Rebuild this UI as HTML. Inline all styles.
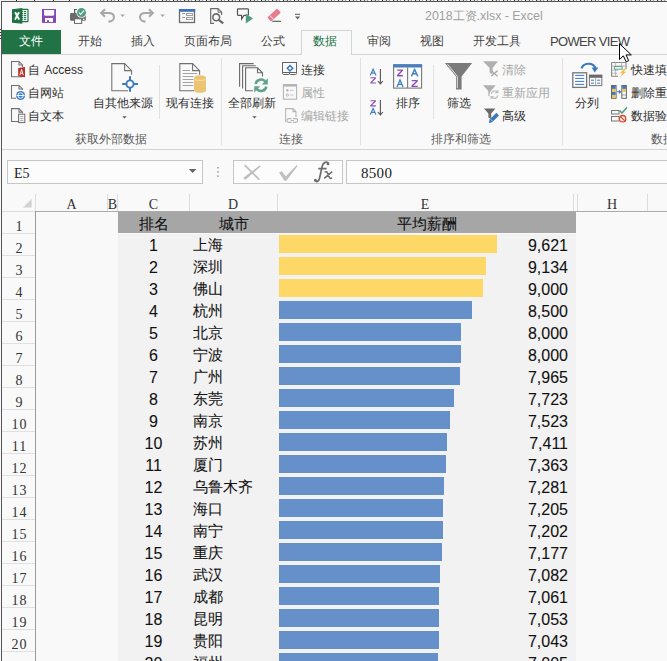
<!DOCTYPE html><html><head><meta charset="utf-8"><style>
*{margin:0;padding:0;box-sizing:border-box}
html,body{width:667px;height:661px;overflow:hidden;background:#f9f9f9}
body{position:relative;font-family:"Liberation Sans",sans-serif;color:#444}
.a{position:absolute}
.t{position:absolute;white-space:nowrap;line-height:1}
svg{position:absolute;overflow:visible}
.rb{font-size:12px;color:#2e2e2e}
.dis{color:#a6a6a6}
.gl{color:#5a5a5a}
.tab{font-size:12px;color:#444}
.ser{font-family:"Liberation Serif",serif}
.cell{font-size:15px;color:#111;-webkit-text-stroke:0.08px #111}
.num{font-size:16px}
</style></head><body>
<div class="a" style="left:0;top:0;width:667px;height:1px;background:#f0f0f0"></div>
<div class="a" style="left:0;top:29px;width:1px;height:1px;background:#333"></div>
<div class="a" style="left:0;top:32px;width:1px;height:1px;background:#333"></div>
<div class="a" style="left:0;top:35px;width:1px;height:1px;background:#333"></div>
<div class="a" style="left:0;top:38px;width:1px;height:1px;background:#333"></div>
<div class="a" style="left:16px;top:0;width:1px;height:1px;background:#222"></div>
<div class="a" style="left:34px;top:0;width:1px;height:1px;background:#222"></div>
<div class="a" style="left:53px;top:0;width:1px;height:1px;background:#222"></div>
<div class="a" style="left:69px;top:0;width:1px;height:1px;background:#222"></div>
<div class="a" style="left:100px;top:0;width:567px;height:1px;background:repeating-linear-gradient(90deg,#555 0 1px,#e6e6e6 1px 3px,#999 3px 4px,#f0f0f0 4px 7px,#333 7px 8px,#ddd 8px 11px)"></div>
<div class="a" style="left:1px;top:1px;width:666px;height:1px;background:#555"></div>
<div class="a" style="left:1px;top:1px;width:1px;height:660px;background:#555"></div>
<div class="t" style="left:425px;top:10px;font-size:12.4px;color:#a0a0a0">2018工资.xlsx - Excel</div>
<div class="a" style="left:2px;top:30px;width:59px;height:24px;background:#217346"></div>
<div class="t tab" style="left:19px;top:35px;color:#fff">文件</div>
<div class="t tab" style="left:78px;top:35px">开始</div>
<div class="t tab" style="left:131px;top:35px">插入</div>
<div class="t tab" style="left:184px;top:35px">页面布局</div>
<div class="t tab" style="left:261px;top:35px">公式</div>
<div class="t tab" style="left:367px;top:35px">审阅</div>
<div class="t tab" style="left:420px;top:35px">视图</div>
<div class="t tab" style="left:473px;top:35px">开发工具</div>
<div class="t" style="left:550px;top:35px;font-size:13px;color:#444;letter-spacing:-0.65px">POWER VIEW</div>
<div class="a" style="left:2px;top:54px;width:665px;height:1px;background:#d4d4d4"></div>
<div class="a" style="left:301px;top:30px;width:51px;height:25px;border:1px solid #d4d4d4;border-bottom:none;background:#f9f9f9"></div>
<div class="t tab" style="left:313px;top:35px;color:#217346">数据</div>
<div class="a" style="left:2px;top:149px;width:665px;height:1px;background:#d4d4d4"></div>
<div class="t rb" style="left:28px;top:64px">自 <span style="margin-left:1px">Access</span></div>
<div class="t rb" style="left:28px;top:87px">自网站</div>
<div class="t rb" style="left:28px;top:110px">自文本</div>
<div class="t rb" style="left:93px;top:97px">自其他来源</div>
<div class="t rb" style="left:166px;top:97px">现有连接</div>
<div class="t rb gl" style="left:75px;top:133px">获取外部数据</div>
<div class="a" style="left:159px;top:65px;width:1px;height:54px;background:#e1e1e1"></div>
<div class="a" style="left:221px;top:58px;width:1px;height:87px;background:#e1e1e1"></div>
<div class="t rb" style="left:228px;top:97px">全部刷新</div>
<div class="t rb" style="left:301px;top:64px">连接</div>
<div class="t rb dis" style="left:301px;top:87px">属性</div>
<div class="t rb dis" style="left:301px;top:110px">编辑链接</div>
<div class="t rb gl" style="left:279px;top:133px">连接</div>
<div class="a" style="left:360px;top:58px;width:1px;height:87px;background:#e1e1e1"></div>
<div class="t rb" style="left:396px;top:97px">排序</div>
<div class="t rb" style="left:447px;top:97px">筛选</div>
<div class="t rb dis" style="left:502px;top:64px">清除</div>
<div class="t rb dis" style="left:502px;top:87px">重新应用</div>
<div class="t rb" style="left:502px;top:110px">高级</div>
<div class="t rb gl" style="left:431px;top:133px">排序和筛选</div>
<div class="a" style="left:433px;top:65px;width:1px;height:54px;background:#e1e1e1"></div>
<div class="a" style="left:562px;top:58px;width:1px;height:87px;background:#e1e1e1"></div>
<div class="t rb" style="left:575px;top:97px">分列</div>
<div class="t rb" style="left:631px;top:64px">快速填充</div>
<div class="t rb" style="left:631px;top:87px">删除重复项</div>
<div class="t rb" style="left:631px;top:110px">数据验证</div>
<div class="t rb gl" style="left:651px;top:133px">数据工具</div>
<div class="a" style="left:7px;top:160px;width:196px;height:24px;border:1px solid #c6c6c6;background:#fcfcfc"></div>
<div class="t ser" style="left:14px;top:167px;font-size:14px;color:#222">E5</div>
<div class="a" style="left:233px;top:160px;width:110px;height:24px;border:1px solid #c6c6c6;background:#fcfcfc"></div>
<div class="a" style="left:346px;top:160px;width:330px;height:24px;border:1px solid #c6c6c6;background:#fcfcfc"></div>
<div class="t ser" style="left:361px;top:166px;font-size:15px;color:#222;letter-spacing:0.3px">8500</div>
<div class="a" style="left:2px;top:211px;width:33px;height:1px;background:#dcdcdc"></div>
<div class="a" style="left:35px;top:211px;width:632px;height:1px;background:#ababab"></div>
<div class="a" style="left:35px;top:194px;width:1px;height:17px;background:#dcdcdc"></div>
<div class="a" style="left:35px;top:211px;width:1px;height:450px;background:#9a9a9a"></div>
<div class="a" style="left:107px;top:194px;width:1px;height:17px;background:#dcdcdc"></div>
<div class="a" style="left:117px;top:194px;width:1px;height:17px;background:#dcdcdc"></div>
<div class="a" style="left:189px;top:194px;width:1px;height:17px;background:#dcdcdc"></div>
<div class="a" style="left:277px;top:194px;width:1px;height:17px;background:#dcdcdc"></div>
<div class="a" style="left:573px;top:194px;width:1px;height:17px;background:#dcdcdc"></div>
<div class="a" style="left:577px;top:194px;width:1px;height:17px;background:#dcdcdc"></div>
<div class="a" style="left:647px;top:194px;width:1px;height:17px;background:#dcdcdc"></div>
<div class="t ser" style="left:56.5px;width:30px;text-align:center;top:198px;font-size:14px;color:#333">A</div>
<div class="t ser" style="left:97.5px;width:30px;text-align:center;top:198px;font-size:14px;color:#333">B</div>
<div class="t ser" style="left:138.5px;width:30px;text-align:center;top:198px;font-size:14px;color:#333">C</div>
<div class="t ser" style="left:218px;width:30px;text-align:center;top:198px;font-size:14px;color:#333">D</div>
<div class="t ser" style="left:410px;width:30px;text-align:center;top:198px;font-size:14px;color:#333">E</div>
<div class="t ser" style="left:597px;width:30px;text-align:center;top:198px;font-size:14px;color:#333">H</div>
<div class="a" style="left:2px;top:233px;width:33px;height:1px;background:#e0e0e0"></div>
<div class="t ser" style="left:3px;width:33px;text-align:center;top:220px;font-size:14px;color:#333;letter-spacing:1px">1</div>
<div class="a" style="left:2px;top:255px;width:33px;height:1px;background:#e0e0e0"></div>
<div class="t ser" style="left:3px;width:33px;text-align:center;top:242px;font-size:14px;color:#333;letter-spacing:1px">2</div>
<div class="a" style="left:2px;top:277px;width:33px;height:1px;background:#e0e0e0"></div>
<div class="t ser" style="left:3px;width:33px;text-align:center;top:264px;font-size:14px;color:#333;letter-spacing:1px">3</div>
<div class="a" style="left:2px;top:299px;width:33px;height:1px;background:#e0e0e0"></div>
<div class="t ser" style="left:3px;width:33px;text-align:center;top:286px;font-size:14px;color:#333;letter-spacing:1px">4</div>
<div class="a" style="left:2px;top:321px;width:33px;height:1px;background:#e0e0e0"></div>
<div class="t ser" style="left:3px;width:33px;text-align:center;top:308px;font-size:14px;color:#333;letter-spacing:1px">5</div>
<div class="a" style="left:2px;top:343px;width:33px;height:1px;background:#e0e0e0"></div>
<div class="t ser" style="left:3px;width:33px;text-align:center;top:330px;font-size:14px;color:#333;letter-spacing:1px">6</div>
<div class="a" style="left:2px;top:365px;width:33px;height:1px;background:#e0e0e0"></div>
<div class="t ser" style="left:3px;width:33px;text-align:center;top:352px;font-size:14px;color:#333;letter-spacing:1px">7</div>
<div class="a" style="left:2px;top:387px;width:33px;height:1px;background:#e0e0e0"></div>
<div class="t ser" style="left:3px;width:33px;text-align:center;top:374px;font-size:14px;color:#333;letter-spacing:1px">8</div>
<div class="a" style="left:2px;top:409px;width:33px;height:1px;background:#e0e0e0"></div>
<div class="t ser" style="left:3px;width:33px;text-align:center;top:396px;font-size:14px;color:#333;letter-spacing:1px">9</div>
<div class="a" style="left:2px;top:431px;width:33px;height:1px;background:#e0e0e0"></div>
<div class="t ser" style="left:3px;width:33px;text-align:center;top:418px;font-size:14px;color:#333;letter-spacing:1px">10</div>
<div class="a" style="left:2px;top:453px;width:33px;height:1px;background:#e0e0e0"></div>
<div class="t ser" style="left:3px;width:33px;text-align:center;top:440px;font-size:14px;color:#333;letter-spacing:1px">11</div>
<div class="a" style="left:2px;top:475px;width:33px;height:1px;background:#e0e0e0"></div>
<div class="t ser" style="left:3px;width:33px;text-align:center;top:462px;font-size:14px;color:#333;letter-spacing:1px">12</div>
<div class="a" style="left:2px;top:497px;width:33px;height:1px;background:#e0e0e0"></div>
<div class="t ser" style="left:3px;width:33px;text-align:center;top:484px;font-size:14px;color:#333;letter-spacing:1px">13</div>
<div class="a" style="left:2px;top:519px;width:33px;height:1px;background:#e0e0e0"></div>
<div class="t ser" style="left:3px;width:33px;text-align:center;top:506px;font-size:14px;color:#333;letter-spacing:1px">14</div>
<div class="a" style="left:2px;top:541px;width:33px;height:1px;background:#e0e0e0"></div>
<div class="t ser" style="left:3px;width:33px;text-align:center;top:528px;font-size:14px;color:#333;letter-spacing:1px">15</div>
<div class="a" style="left:2px;top:563px;width:33px;height:1px;background:#e0e0e0"></div>
<div class="t ser" style="left:3px;width:33px;text-align:center;top:550px;font-size:14px;color:#333;letter-spacing:1px">16</div>
<div class="a" style="left:2px;top:585px;width:33px;height:1px;background:#e0e0e0"></div>
<div class="t ser" style="left:3px;width:33px;text-align:center;top:572px;font-size:14px;color:#333;letter-spacing:1px">17</div>
<div class="a" style="left:2px;top:607px;width:33px;height:1px;background:#e0e0e0"></div>
<div class="t ser" style="left:3px;width:33px;text-align:center;top:594px;font-size:14px;color:#333;letter-spacing:1px">18</div>
<div class="a" style="left:2px;top:629px;width:33px;height:1px;background:#e0e0e0"></div>
<div class="t ser" style="left:3px;width:33px;text-align:center;top:616px;font-size:14px;color:#333;letter-spacing:1px">19</div>
<div class="a" style="left:2px;top:651px;width:33px;height:1px;background:#e0e0e0"></div>
<div class="t ser" style="left:3px;width:33px;text-align:center;top:638px;font-size:14px;color:#333;letter-spacing:1px">20</div>
<div class="a" style="left:2px;top:673px;width:33px;height:1px;background:#e0e0e0"></div>
<div class="t ser" style="left:3px;width:33px;text-align:center;top:660px;font-size:14px;color:#333;letter-spacing:1px">21</div>
<div class="a" style="left:118px;top:212px;width:458px;height:21px;background:#a6a6a6"></div>
<div class="t cell" style="left:118px;width:71px;text-align:center;top:216px">排名</div>
<div class="t cell" style="left:190px;width:88px;text-align:center;top:216px">城市</div>
<div class="t cell" style="left:279px;width:296px;text-align:center;top:216px">平均薪酬</div>
<div class="a" style="left:118px;top:234px;width:458px;height:427px;background:#f2f2f2"></div>
<div class="a" style="left:279px;top:235px;width:218px;height:18px;background:#fed866"></div>
<div class="t cell num" style="left:118px;width:71px;text-align:center;top:238px">1</div>
<div class="t cell" style="left:193px;top:237px">上海</div>
<div class="t cell num" style="left:400px;width:168px;text-align:right;top:238px">9,621</div>
<div class="a" style="left:279px;top:257px;width:207px;height:18px;background:#fed866"></div>
<div class="t cell num" style="left:118px;width:71px;text-align:center;top:260px">2</div>
<div class="t cell" style="left:193px;top:259px">深圳</div>
<div class="t cell num" style="left:400px;width:168px;text-align:right;top:260px">9,134</div>
<div class="a" style="left:279px;top:279px;width:204px;height:18px;background:#fed866"></div>
<div class="t cell num" style="left:118px;width:71px;text-align:center;top:282px">3</div>
<div class="t cell" style="left:193px;top:281px">佛山</div>
<div class="t cell num" style="left:400px;width:168px;text-align:right;top:282px">9,000</div>
<div class="a" style="left:279px;top:301px;width:193px;height:18px;background:#6690c9"></div>
<div class="t cell num" style="left:118px;width:71px;text-align:center;top:304px">4</div>
<div class="t cell" style="left:193px;top:303px">杭州</div>
<div class="t cell num" style="left:400px;width:168px;text-align:right;top:304px">8,500</div>
<div class="a" style="left:279px;top:323px;width:182px;height:18px;background:#6690c9"></div>
<div class="t cell num" style="left:118px;width:71px;text-align:center;top:326px">5</div>
<div class="t cell" style="left:193px;top:325px">北京</div>
<div class="t cell num" style="left:400px;width:168px;text-align:right;top:326px">8,000</div>
<div class="a" style="left:279px;top:345px;width:182px;height:18px;background:#6690c9"></div>
<div class="t cell num" style="left:118px;width:71px;text-align:center;top:348px">6</div>
<div class="t cell" style="left:193px;top:347px">宁波</div>
<div class="t cell num" style="left:400px;width:168px;text-align:right;top:348px">8,000</div>
<div class="a" style="left:279px;top:367px;width:181px;height:18px;background:#6690c9"></div>
<div class="t cell num" style="left:118px;width:71px;text-align:center;top:370px">7</div>
<div class="t cell" style="left:193px;top:369px">广州</div>
<div class="t cell num" style="left:400px;width:168px;text-align:right;top:370px">7,965</div>
<div class="a" style="left:279px;top:389px;width:175px;height:18px;background:#6690c9"></div>
<div class="t cell num" style="left:118px;width:71px;text-align:center;top:392px">8</div>
<div class="t cell" style="left:193px;top:391px">东莞</div>
<div class="t cell num" style="left:400px;width:168px;text-align:right;top:392px">7,723</div>
<div class="a" style="left:279px;top:411px;width:171px;height:18px;background:#6690c9"></div>
<div class="t cell num" style="left:118px;width:71px;text-align:center;top:414px">9</div>
<div class="t cell" style="left:193px;top:413px">南京</div>
<div class="t cell num" style="left:400px;width:168px;text-align:right;top:414px">7,523</div>
<div class="a" style="left:279px;top:433px;width:168px;height:18px;background:#6690c9"></div>
<div class="t cell num" style="left:118px;width:71px;text-align:center;top:436px">10</div>
<div class="t cell" style="left:193px;top:435px">苏州</div>
<div class="t cell num" style="left:400px;width:168px;text-align:right;top:436px">7,411</div>
<div class="a" style="left:279px;top:455px;width:167px;height:18px;background:#6690c9"></div>
<div class="t cell num" style="left:118px;width:71px;text-align:center;top:458px">11</div>
<div class="t cell" style="left:193px;top:457px">厦门</div>
<div class="t cell num" style="left:400px;width:168px;text-align:right;top:458px">7,363</div>
<div class="a" style="left:279px;top:477px;width:165px;height:18px;background:#6690c9"></div>
<div class="t cell num" style="left:118px;width:71px;text-align:center;top:480px">12</div>
<div class="t cell" style="left:193px;top:479px">乌鲁木齐</div>
<div class="t cell num" style="left:400px;width:168px;text-align:right;top:480px">7,281</div>
<div class="a" style="left:279px;top:499px;width:164px;height:18px;background:#6690c9"></div>
<div class="t cell num" style="left:118px;width:71px;text-align:center;top:502px">13</div>
<div class="t cell" style="left:193px;top:501px">海口</div>
<div class="t cell num" style="left:400px;width:168px;text-align:right;top:502px">7,205</div>
<div class="a" style="left:279px;top:521px;width:164px;height:18px;background:#6690c9"></div>
<div class="t cell num" style="left:118px;width:71px;text-align:center;top:524px">14</div>
<div class="t cell" style="left:193px;top:523px">南宁</div>
<div class="t cell num" style="left:400px;width:168px;text-align:right;top:524px">7,202</div>
<div class="a" style="left:279px;top:543px;width:163px;height:18px;background:#6690c9"></div>
<div class="t cell num" style="left:118px;width:71px;text-align:center;top:546px">15</div>
<div class="t cell" style="left:193px;top:545px">重庆</div>
<div class="t cell num" style="left:400px;width:168px;text-align:right;top:546px">7,177</div>
<div class="a" style="left:279px;top:565px;width:161px;height:18px;background:#6690c9"></div>
<div class="t cell num" style="left:118px;width:71px;text-align:center;top:568px">16</div>
<div class="t cell" style="left:193px;top:567px">武汉</div>
<div class="t cell num" style="left:400px;width:168px;text-align:right;top:568px">7,082</div>
<div class="a" style="left:279px;top:587px;width:160px;height:18px;background:#6690c9"></div>
<div class="t cell num" style="left:118px;width:71px;text-align:center;top:590px">17</div>
<div class="t cell" style="left:193px;top:589px">成都</div>
<div class="t cell num" style="left:400px;width:168px;text-align:right;top:590px">7,061</div>
<div class="a" style="left:279px;top:609px;width:160px;height:18px;background:#6690c9"></div>
<div class="t cell num" style="left:118px;width:71px;text-align:center;top:612px">18</div>
<div class="t cell" style="left:193px;top:611px">昆明</div>
<div class="t cell num" style="left:400px;width:168px;text-align:right;top:612px">7,053</div>
<div class="a" style="left:279px;top:631px;width:160px;height:18px;background:#6690c9"></div>
<div class="t cell num" style="left:118px;width:71px;text-align:center;top:634px">19</div>
<div class="t cell" style="left:193px;top:633px">贵阳</div>
<div class="t cell num" style="left:400px;width:168px;text-align:right;top:634px">7,043</div>
<div class="a" style="left:279px;top:653px;width:159px;height:18px;background:#6690c9"></div>
<div class="t cell num" style="left:118px;width:71px;text-align:center;top:656px">20</div>
<div class="t cell" style="left:193px;top:655px">福州</div>
<div class="t cell num" style="left:400px;width:168px;text-align:right;top:656px">7,005</div>
<svg style="left:0;top:0" width="667" height="661" viewBox="0 0 667 661"><path d="M22,9.4 H27.3 Q28,9.4 28,10.1 V21 Q28,21.7 27.3,21.7 H22" fill="#fff" stroke="#1f7244" stroke-width="1.2"/>
<rect x="21.6" y="10.95" width="1.6" height="1.1" fill="#1f7244"/><rect x="24" y="10.95" width="2.2" height="1.1" fill="#1f7244"/>
<rect x="21.6" y="12.90" width="1.6" height="1.1" fill="#1f7244"/><rect x="24" y="12.90" width="2.2" height="1.1" fill="#1f7244"/>
<rect x="21.6" y="14.85" width="1.6" height="1.1" fill="#1f7244"/><rect x="24" y="14.85" width="2.2" height="1.1" fill="#1f7244"/>
<rect x="21.6" y="16.80" width="1.6" height="1.1" fill="#1f7244"/><rect x="24" y="16.80" width="2.2" height="1.1" fill="#1f7244"/>
<rect x="21.6" y="18.75" width="1.6" height="1.1" fill="#1f7244"/><rect x="24" y="18.75" width="2.2" height="1.1" fill="#1f7244"/>
<path d="M12,9.2 L22.3,8 V23.7 L12,22.7 Z" fill="#1f7244"/>
<path d="M15.1,12.2 L19.2,19.6 M19,12.2 L15,19.6" stroke="#fff" stroke-width="1.9"/>
<rect x="42" y="9" width="14" height="13.9" fill="#8447b3"/>
<path d="M44,10 H54.2 V14.6 Q54.2,15.7 53.1,15.7 H45.1 Q44,15.7 44,14.6 Z" fill="#fafafa"/>
<rect x="45" y="18" width="8" height="4" fill="#fafafa"/>
<rect x="47" y="20.2" width="2" height="1.8" fill="#8447b3"/>
<path d="M76.8,9.5 H74.6 V13.3 H76.8" fill="none" stroke="#555" stroke-width="1.1"/>
<rect x="70" y="13.1" width="15.8" height="7.7" rx="1.2" fill="#6b6b6b"/>
<circle cx="83.6" cy="19.4" r="0.8" fill="#fff"/>
<rect x="74.5" y="18.8" width="7.2" height="4.6" fill="#fff" stroke="#666" stroke-width="1"/>
<circle cx="81.5" cy="12.6" r="5.2" fill="#fafafa"/><circle cx="81.5" cy="12.6" r="4.5" fill="#4f9e80"/>
<path d="M79,12.5 L80.7,14.4 L84,10.6" fill="none" stroke="#fff" stroke-width="1.1"/>
<path d="M101.5,13 H108.3 C112,13 114,15 114,17.3 C114,19.6 112,21.6 108.5,21.6" fill="none" stroke="#a8a8a8" stroke-width="2.1"/>
<path d="M105,9.3 L101.2,13 L105,16.7" fill="none" stroke="#a8a8a8" stroke-width="2.1"/>
<path d="M120.2,14.5 H125 L122.6,17 Z" fill="#a8a8a8"/>
<path d="M152.5,13 H145.7 C142,13 140,15 140,17.3 C140,19.6 142,21.6 145.5,21.6" fill="none" stroke="#a8a8a8" stroke-width="2.1"/>
<path d="M149,9.3 L152.8,13 L149,16.7" fill="none" stroke="#a8a8a8" stroke-width="2.1"/>
<path d="M160.2,14.5 H165 L162.6,17 Z" fill="#a8a8a8"/>
<rect x="179.5" y="10" width="15" height="12.5" fill="none" stroke="#6a6a6a" stroke-width="1.3"/>
<rect x="179" y="9" width="16.2" height="2.8" fill="#3d74b9"/>
<path d="M182,13.5 H185 M182,17.5 H185" stroke="#a0a0a0" stroke-width="1"/>
<rect x="186.5" y="13.5" width="6" height="2" fill="none" stroke="#a0a0a0" stroke-width="1"/>
<rect x="186.5" y="17.5" width="6" height="2" fill="none" stroke="#a0a0a0" stroke-width="1"/>
<path d="M214,23.3 H210.7 V8.6 H218 L221.6,12.2 V15" fill="none" stroke="#6a6a6a" stroke-width="1.2"/>
<path d="M218,8.6 V12.2 H221.6" fill="none" stroke="#6a6a6a" stroke-width="1"/>
<circle cx="216.2" cy="17.3" r="3.4" fill="#f9f9f9" stroke="#6a6a6a" stroke-width="1.6"/>
<path d="M218.7,19.8 L223.2,23.4" stroke="#6a6a6a" stroke-width="2.2"/>
<path d="M238.2,8.8 H247.6 Q248.4,8.8 248.4,9.6 V14.6 Q248.4,15.3 247.6,15.3 H244 L241.6,19 V15.3 H238.2 Q237.5,15.3 237.5,14.6 V9.6 Q237.5,8.8 238.2,8.8 Z" fill="none" stroke="#555" stroke-width="1.2"/>
<path d="M245.8,13.6 L253,18.5 L245.8,23.4 Z" fill="#4e9d7f"/>
<path d="M268,16.8 L276.2,9.3 Q277,8.6 277.8,9.3 L280.3,11.8 Q281,12.6 280.2,13.3 L272,20.8 Q271.2,21.5 270.4,20.8 L268,18.4 Q267.2,17.6 268,16.8 Z" fill="#e67e8f"/>
<path d="M269.6,15.4 L273.6,19.3" stroke="#f9f9f9" stroke-width="0.9"/>
<path d="M272.3,21.3 H281" stroke="#555" stroke-width="1.1"/>
<path d="M295,14.3 H300.2" stroke="#666" stroke-width="1.1"/>
<path d="M295,16.6 H300.2 L297.6,19.6 Z" fill="#666"/>
<path d="M619.5,43.7 V59.6 L623.3,55.8 L626.2,61.8 L628.7,60.7 L626,54.9 L631.3,54.9 Z" fill="#fff" stroke="#000" stroke-width="1" stroke-linejoin="round"/>
<path d="M22.5,76.8 H11.5 V61.5 H19.0 L22.5,65.0 V67" fill="none" stroke="#707070" stroke-width="1.05"/><path d="M19.0,61.5 V65.0 H22.5" fill="none" stroke="#707070" stroke-width="1.05"/>
<path d="M18.2,68 L25,67 V77.2 L18.2,76.2 Z" fill="#b7302f"/>
<path d="M19.9,75.2 L21.6,69.4 L23.3,75.2 M20.5,73.3 H22.7" fill="none" stroke="#fff" stroke-width="0.9"/>
<path d="M16,98.2 H11.5 V85.5 H19.0 L22.5,89.0 V90" fill="none" stroke="#707070" stroke-width="1.05"/><path d="M19.0,85.5 V89.0 H22.5" fill="none" stroke="#707070" stroke-width="1.05"/>
<circle cx="20.6" cy="95.5" r="4.5" fill="#3f7fc0"/>
<circle cx="20.6" cy="95.5" r="2.7" fill="none" stroke="#fff" stroke-width="0.9"/>
<path d="M16.5,95.5 H24.7" stroke="#fff" stroke-width="0.9"/>
<path d="M22.5,121.5 H11.5 V108.6 H19.0 L22.5,112.1 V113.5" fill="none" stroke="#707070" stroke-width="1.05"/><path d="M19.0,108.6 V112.1 H22.5" fill="none" stroke="#707070" stroke-width="1.05"/>
<rect x="18.6" y="114.2" width="6.2" height="8.4" fill="#f9f9f9" stroke="#6a6a6a" stroke-width="1"/>
<path d="M20,116.6 H23.4 M20,118.6 H23.4 M20,120.6 H23.4" stroke="#999" stroke-width="0.8"/>
<path d="M128,90.7 H111.8 V63.6 H124.6 L131.6,70.6 V74.8" fill="none" stroke="#707070" stroke-width="1.05"/><path d="M124.6,63.6 V70.6 H131.6" fill="none" stroke="#707070" stroke-width="1.05"/>
<circle cx="130" cy="84" r="3.6" fill="none" stroke="#3b78be" stroke-width="1.9"/>
<path d="M122.2,84 H126.4 M133.6,84 H138 M130,76.2 V80.4 M130,87.6 V91.8" stroke="#3b78be" stroke-width="2"/>
<path d="M122.4,116.3 H126.6 L124.5,118.6 Z" fill="#555"/>
<path d="M194,90.7 H179.8 V63.6 H192.6 L199.6,70.6 V74.8" fill="none" stroke="#707070" stroke-width="1.05"/><path d="M192.6,63.6 V70.6 H199.6" fill="none" stroke="#707070" stroke-width="1.05"/>
<path d="M182.6,70.5 H190 M182.6,73.5 H197 M182.6,76.5 H193.5 M182.6,79.5 H193.5 M182.6,82.5 H193.5 M182.6,85.5 H193.5" stroke="#a3a3a3" stroke-width="1"/>
<path d="M194,77.5 V90.8 A6,2 0 0 0 206,90.8 V77.5 Z" fill="#ebc574"/>
<ellipse cx="200" cy="77.5" rx="6" ry="2.2" fill="#ebc574"/>
<path d="M194.4,79.2 A6,2 0 0 0 205.6,79.2" fill="none" stroke="#f7e6c2" stroke-width="0.8"/>
<path d="M239.6,86.8 V63.6 H253.7 M242.6,88.6 V65.7 H255.8 M252.8,90.7 H245.6 V67.8 H257.5 L262.5,72.8 V76.5 M257.5,67.8 V72.8 H262.5" fill="none" stroke="#6a6a6a" stroke-width="1.1"/>
<circle cx="261" cy="85.3" r="7.8" fill="#f9f9f9"/>
<path d="M255.6,84 A5.6,5.6 0 0 1 265.2,81.4" fill="none" stroke="#5ea38a" stroke-width="2.6"/>
<path d="M266.4,86.6 A5.6,5.6 0 0 1 256.8,89.2" fill="none" stroke="#5ea38a" stroke-width="2.6"/>
<path d="M267.8,78.2 V84.4 H261.8 Z" fill="#5ea38a"/>
<path d="M254.2,92.4 V86.2 H260.2 Z" fill="#5ea38a"/>
<path d="M252.4,116.3 H256.6 L254.5,118.6 Z" fill="#555"/>
<rect x="282.5" y="62.5" width="14" height="10" fill="none" stroke="#666" stroke-width="1"/>
<path d="M282.5,72.5 V73.4 Q282.5,74.5 283.6,74.5 H288.4 Q289.5,74.5 289.5,73.4 Q289.5,74.5 290.6,74.5 H295.4 Q296.5,74.5 296.5,73.4 V72.5" fill="none" stroke="#666" stroke-width="1"/>
<path d="M290,65.6 L292.7,68.3 L290,71 L287.3,68.3 Z" fill="#fff" stroke="#3b78be" stroke-width="1.5"/>
<rect x="283.4" y="84.6" width="13.2" height="14.6" fill="none" stroke="#b5b5b5" stroke-width="1.1"/>
<rect x="283" y="84.2" width="14" height="2.4" fill="#b5b5b5"/>
<circle cx="287.3" cy="90.3" r="1.2" fill="#b5b5b5"/><circle cx="287.3" cy="95" r="1.2" fill="none" stroke="#b5b5b5" stroke-width="0.9"/>
<path d="M289.8,90.3 H293.6 M289.8,95 H293.6" stroke="#c9c9c9" stroke-width="1"/>
<path d="M286,121.8 H285.6 V108.6 H293 L296,111.6 V117" fill="none" stroke="#b5b5b5" stroke-width="1.05"/><path d="M293,108.6 V111.6 H296" fill="none" stroke="#b5b5b5" stroke-width="1.05"/>
<path d="M291.6,118.6 H288.8 A1.9,1.9 0 0 0 288.8,122.4 H291.6 M290.6,120.5 H294 M293,118.6 H295.8 A1.9,1.9 0 0 1 295.8,122.4 H293" fill="none" stroke="#b5b5b5" stroke-width="1.1"/>
<path d="M370.2,75.60000000000001 L373.09999999999997,69.2 L376.0,75.60000000000001 M371.476,73.168 H374.724" fill="none" stroke="#3f7fc5" stroke-width="1.1"/>
<path d="M370.5,77.75 H375.7 L370.5,83.05000000000001 H375.9" fill="none" stroke="#8a4cba" stroke-width="1.1" stroke-linejoin="bevel"/>
<path d="M380.4,69 V83.8 M377.9,81 L380.4,83.8 L382.9,81" fill="none" stroke="#555" stroke-width="1.1"/>
<path d="M370.5,100.75 H375.7 L370.5,105.85000000000001 H375.9" fill="none" stroke="#8a4cba" stroke-width="1.1" stroke-linejoin="bevel"/>
<path d="M370.2,114.80000000000001 L373.09999999999997,108.4 L376.0,114.80000000000001 M371.476,112.36800000000001 H374.724" fill="none" stroke="#3f7fc5" stroke-width="1.1"/>
<path d="M380.4,100 V114.8 M377.9,112 L380.4,114.8 L382.9,112" fill="none" stroke="#555" stroke-width="1.1"/>
<rect x="393.6" y="65.5" width="28" height="22.6" fill="#fbfbfb" stroke="#777" stroke-width="1.1"/>
<rect x="393.1" y="64.1" width="29" height="3.4" fill="#4a7ebb"/>
<path d="M407.6,67.5 V88" stroke="#777" stroke-width="1.1"/>
<path d="M397.3,70.075 H402.7 L397.3,75.72500000000001 H402.9" fill="none" stroke="#8a4cba" stroke-width="1.35" stroke-linejoin="bevel"/>
<path d="M397,87 L400.0,80 L403,87 M398.32,84.34 H401.68" fill="none" stroke="#3f7fc5" stroke-width="1.35"/>
<path d="M411.4,76.4 L414.59999999999997,69.4 L417.79999999999995,76.4 M412.808,73.74000000000001 H416.392" fill="none" stroke="#3f7fc5" stroke-width="1.35"/>
<path d="M411.7,80.675 H417.49999999999994 L411.7,86.325 H417.69999999999993" fill="none" stroke="#8a4cba" stroke-width="1.35" stroke-linejoin="bevel"/>
<path d="M444.9,63.1 H472.1 L461.6,76.5 V89.4 H456 V76.5 Z" fill="#7a7a7a"/>
<path d="M447.6,64.3 L457.3,76.4 V88.2" fill="none" stroke="#fff" stroke-width="0.8"/>
<path d="M483,61.2 H498 L492.6,68 V74.5 L489.6,72.5 V68 Z" fill="#b0b0b0"/>
<path d="M491.2,70.6 L497.6,76.2 M497.6,70.6 L491.2,76.2" stroke="#b0b0b0" stroke-width="1.4"/>
<path d="M483,85.2 H495.6 L491.2,91 V97.6 L488.3,95.6 V91 Z" fill="#b0b0b0"/>
<circle cx="494.5" cy="94.6" r="5" fill="#f9f9f9"/>
<path d="M491.2,93.8 A3.5,3.5 0 0 1 497.2,92 M497.8,95.4 A3.5,3.5 0 0 1 491.8,97.2" fill="none" stroke="#bdbdbd" stroke-width="1.3"/>
<path d="M498.4,89.6 V93.2 H494.8 Z M490.6,99.6 V96 H494.2 Z" fill="#bdbdbd"/>
<path d="M484,108.4 H495.4 L491.2,113.6 V119.2 L488.4,117.6 V113.6 Z" fill="#6a6a6a"/>
<path d="M488.8,123 L489.6,119.6 L496.4,112.8 L499,115.4 L492.2,122.2 Z" fill="#3b78be"/><path d="M490.6,119.2 L493,121.6" stroke="#f9f9f9" stroke-width="0.6"/>
<rect x="572.8" y="72.8" width="13.8" height="14.6" fill="#fbfbfb" stroke="#777" stroke-width="1.3"/>
<path d="M575.2,75.4 H584.2 M575.2,78.4 H584.2 M575.2,81.4 H584.2 M575.2,84.4 H584.2" stroke="#3b78be" stroke-width="1"/>
<rect x="589.4" y="75.2" width="12.4" height="10.4" fill="#fbfbfb" stroke="#777" stroke-width="1"/>
<rect x="589" y="74.8" width="13.2" height="3" fill="#6a6a6a"/>
<path d="M595.6,77.8 V85.6" stroke="#999" stroke-width="0.8"/>
<path d="M591,80.2 H594 M597.2,80.2 H600.2 M591,83.2 H594 M597.2,83.2 H600.2" stroke="#3b78be" stroke-width="1"/>
<path d="M581.6,68.4 A7.2,6.2 0 0 1 595.4,68" fill="none" stroke="#3b78be" stroke-width="2.2"/>
<path d="M591.6,67.6 L594.8,72.6 L598.4,67.4 Z" fill="#3b78be"/>
<path d="M611.6,62.5 H626 V69 M611.6,62.5 V76.2 H618" fill="none" stroke="#888" stroke-width="1.1"/>
<path d="M611.6,66 H626 M611.6,70.2 H618 M611.6,73.2 H617 M615.6,62.5 V76 M621.6,62.5 V66" stroke="#aaa" stroke-width="0.8"/>
<rect x="614.4" y="66.6" width="7.8" height="2.6" fill="#f9f9f9" stroke="#5ea38a" stroke-width="1"/>
<path d="M624.4,68.4 L619.8,73.2 H622.6 L619.4,77.4 L626.4,71.8 H623.6 L626.6,68.4 Z" fill="#f2c050"/>
<rect x="611.5" y="85.5" width="4.6" height="12.8" fill="#fafafa" stroke="#666" stroke-width="1"/>
<rect x="612.0" y="86" width="3.6" height="2.9" fill="#3b78be"/>
<rect x="612.0" y="89" width="3.6" height="2.9" fill="#f0c05a"/>
<rect x="612.0" y="92" width="3.6" height="2.9" fill="#3b78be"/>
<rect x="612.0" y="95" width="3.6" height="2.9" fill="#f0c05a"/>
<rect x="621.8" y="85.5" width="4.6" height="12.8" fill="#fafafa" stroke="#666" stroke-width="1"/>
<rect x="622.3" y="86" width="3.6" height="2.9" fill="#3b78be"/>
<rect x="622.3" y="89" width="3.6" height="2.9" fill="#f0c05a"/>
<path d="M621.8,95 H626.4" stroke="#888" stroke-width="0.8"/>
<path d="M617.2,91.8 H620.4 M619,90.3 L620.6,91.8 L619,93.3" fill="none" stroke="#3b78be" stroke-width="1.1"/>
<rect x="611.5" y="110.5" width="7.5" height="3.5" fill="none" stroke="#777" stroke-width="1"/>
<rect x="611.5" y="116.5" width="7.5" height="4.5" fill="none" stroke="#777" stroke-width="1"/>
<path d="M619.6,110.4 L622,113 L627,107.2" fill="none" stroke="#4f9e80" stroke-width="1.5"/>
<circle cx="622.6" cy="118.7" r="4.3" fill="#f9f9f9"/>
<circle cx="622.6" cy="118.7" r="3.2" fill="none" stroke="#d9472b" stroke-width="1.3"/>
<path d="M620.4,116.5 L624.8,120.9" stroke="#d9472b" stroke-width="1.2"/><path d="M188.8,169 H196.4 L192.6,173 Z" fill="#666"/>
<rect x="217.2" y="167" width="1.5" height="1.5" fill="#999"/><rect x="217.2" y="171.2" width="1.5" height="1.5" fill="#999"/><rect x="217.2" y="175.4" width="1.5" height="1.5" fill="#999"/>
<path d="M244.6,165.2 L259.4,179.6" stroke="#bdbdbd" stroke-width="1.7"/>
<path d="M259.6,165.4 L260.6,166.6 L245.4,179.8 L243.2,178 Z" fill="#bdbdbd"/>
<path d="M279,172.6 L281.8,171.2 L285.8,176.2 L296.8,165 L297.6,166 L286.4,180.8 L284.6,181 Z" fill="#c0c0c0"/>
<path d="M23,207.6 L31.6,199 V207.6 Z" fill="#d2d2d2"/>
<path d="M328.6,163.4 C326.6,161 323.2,162.2 322.2,166.2 L319.6,178 C318.8,181.8 316.4,182.4 314.8,180.4 M318.2,168.6 H326.6" fill="none" stroke="#6e6e6e" stroke-width="1.7"/>
<circle cx="328" cy="163.9" r="1.4" fill="#6e6e6e"/><circle cx="315.4" cy="180.2" r="1.4" fill="#6e6e6e"/>
<path d="M324.6,172.2 C326.2,171.2 327,171.6 327.8,173.6 L329.4,177.4 C330,178.8 331,178.6 332,177.6 M332.2,171.6 L324.2,178.4" fill="none" stroke="#6e6e6e" stroke-width="1.5"/></svg>
</body></html>
